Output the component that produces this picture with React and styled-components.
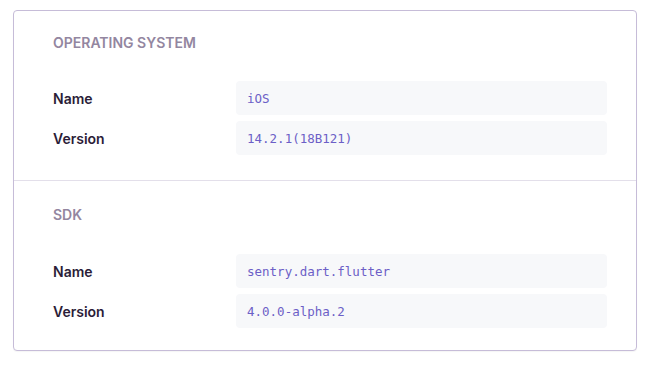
import React from 'react';
import styled, { createGlobalStyle } from 'styled-components';

const GlobalStyle = createGlobalStyle`
  body {
    margin: 0;
    background: #ffffff;
    font-family: Inter, "Noto Sans", sans-serif;
  }
`;

const Page = styled.div`
  padding: 10px 15px 15px 13px;
`;

const Card = styled.div`
  border: 1px solid #c6bcd8;
  border-radius: 4px;
  background: #fff;
  box-shadow: 0 1px 1px rgba(0, 0, 0, 0.04);
`;

const Section = styled.section`
  padding: ${props => (props.first ? '22px 29px 25px 39px' : '24px 29px 22px 39px')};
  border-top: ${props => (props.first ? 'none' : '1px solid #e3dfea')};
`;

const Heading = styled.h3`
  margin: 0 0 ${props => (props.first ? '28px' : '29px')};
  font-size: 14px;
  line-height: 20px;
  font-weight: 600;
  text-transform: uppercase;
  color: #9386a0;
`;

const Rows = styled.div`
  display: flex;
  flex-direction: column;
  gap: 6px;
`;

const Row = styled.div`
  display: grid;
  grid-template-columns: 183px 1fr;
  align-items: center;
`;

const Key = styled.div`
  font-size: 14px;
  font-weight: 600;
  color: #2b1d38;
`;

const Value = styled.div`
  height: 34px;
  display: flex;
  align-items: center;
  padding: 0 11px;
  background: #f7f8fa;
  border-radius: 4px;
  font-family: "DejaVu Sans Mono", "Liberation Mono", monospace;
  font-size: 12.5px;
  color: #6c5fc7;
`;

const sections = [
  {
    title: 'Operating System',
    rows: [
      ['Name', 'iOS'],
      ['Version', '14.2.1(18B121)'],
    ],
  },
  {
    title: 'SDK',
    rows: [
      ['Name', 'sentry.dart.flutter'],
      ['Version', '4.0.0-alpha.2'],
    ],
  },
];

export default function App() {
  return (
    <>
      <GlobalStyle />
      <Page>
        <Card>
          {sections.map((section, i) => (
            <Section key={section.title} first={i === 0}>
              <Heading first={i === 0}>{section.title}</Heading>
              <Rows>
                {section.rows.map(([key, value]) => (
                  <Row key={key}>
                    <Key>{key}</Key>
                    <Value>{value}</Value>
                  </Row>
                ))}
              </Rows>
            </Section>
          ))}
        </Card>
      </Page>
    </>
  );
}
